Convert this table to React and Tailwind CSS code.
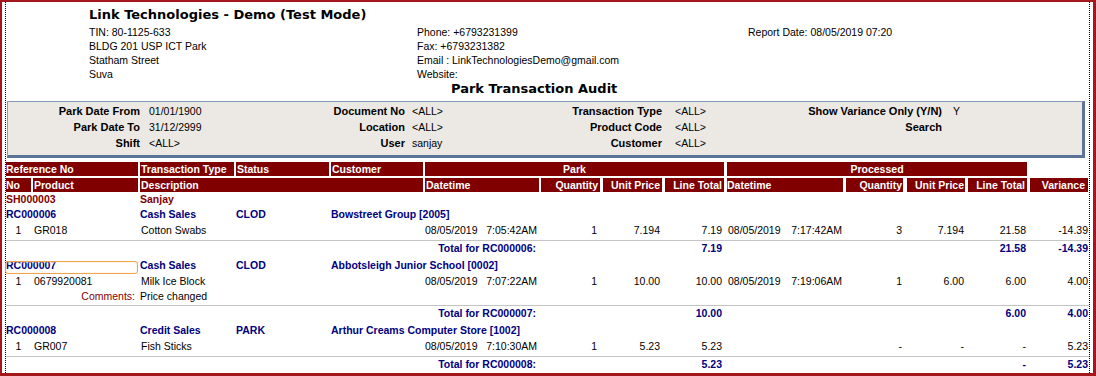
import React from 'react';

const sans = "font-['Liberation_Sans',Arial,sans-serif]";
const verdana = "font-['DejaVu_Sans',Verdana,sans-serif]";

const filterRows = [
  ['Park Date From', '01/01/1900', 'Document No', '<ALL>', 'Transaction Type', '<ALL>', 'Show Variance Only (Y/N)', 'Y'],
  ['Park Date To', '31/12/2999', 'Location', '<ALL>', 'Product Code', '<ALL>', 'Search', ''],
  ['Shift', '<ALL>', 'User', 'sanjay', 'Customer', '<ALL>', '', ''],
];

const groups = [
  {
    ref: 'RC000006',
    type: 'Cash Sales',
    status: 'CLOD',
    customer: 'Bowstreet Group [2005]',
    items: [
      {
        no: '1', code: 'GR018', desc: 'Cotton Swabs',
        pDate: '08/05/2019', pTime: '7:05:42AM', pQty: '1', pPrice: '7.194', pTotal: '7.19',
        dDate: '08/05/2019', dTime: '7:17:42AM', dQty: '3', dPrice: '7.194', dTotal: '21.58', variance: '-14.39',
      },
    ],
    total: { park: '7.19', processed: '21.58', variance: '-14.39' },
  },
  {
    ref: 'RC000007',
    type: 'Cash Sales',
    status: 'CLOD',
    customer: 'Abbotsleigh Junior School [0002]',
    focused: true,
    items: [
      {
        no: '1', code: '0679920081', desc: 'Milk Ice Block',
        pDate: '08/05/2019', pTime: '7:07:22AM', pQty: '1', pPrice: '10.00', pTotal: '10.00',
        dDate: '08/05/2019', dTime: '7:19:06AM', dQty: '1', dPrice: '6.00', dTotal: '6.00', variance: '4.00',
        comment: 'Price changed',
      },
    ],
    total: { park: '10.00', processed: '6.00', variance: '4.00' },
  },
  {
    ref: 'RC000008',
    type: 'Credit Sales',
    status: 'PARK',
    customer: 'Arthur Creams Computer Store [1002]',
    items: [
      {
        no: '1', code: 'GR007', desc: 'Fish Sticks',
        pDate: '08/05/2019', pTime: '7:10:30AM', pQty: '1', pPrice: '5.23', pTotal: '5.23',
        dDate: '', dTime: '', dQty: '-', dPrice: '-', dTotal: '-', variance: '5.23',
      },
    ],
    total: { park: '5.23', processed: '-', variance: '5.23' },
  },
];

function Heading() {
  return (
    <>
      <div className="pl-[83px] pt-[4px]">
        <div className={`${verdana} h-[17px] text-[13px] font-bold leading-[17px]`}>
          Link Technologies - Demo (Test Mode)
        </div>
        <div className="mt-[2px] flex leading-[14px]">
          <div className="w-[328px]">
            <div>TIN: 80-1125-633</div>
            <div>BLDG 201 USP ICT Park</div>
            <div>Statham Street</div>
            <div>Suva</div>
          </div>
          <div className="w-[331px]">
            <div>Phone: +6793231399</div>
            <div>Fax: +6793231382</div>
            <div>Email : LinkTechnologiesDemo@gmail.com</div>
            <div>Website:</div>
          </div>
          <div>Report Date: 08/05/2019 07:20</div>
        </div>
      </div>
      <div className={`${verdana} h-[16px] pl-[445px] text-[13px] font-bold leading-[16px]`}>
        Park Transaction Audit
      </div>
    </>
  );
}

function Filters() {
  return (
    <div className="ml-px mt-[4px] w-[1078px] border-t border-l border-r-[3px] border-b-[3px] border-t-[#8499b9] border-l-[#8499b9] border-r-[#5b7498] border-b-[#5b7498] bg-[#ece9e5] pt-px pb-[4px]">
      {filterRows.map((r, idx) => (
        <div
          key={idx}
          className="grid h-[16px] grid-cols-[132px_135px_130px_127px_130px_110px_170px_1fr] leading-[16px]"
        >
          <div className="text-right text-[11px] font-bold">{r[0]}</div>
          <div className="pl-[9px]">{r[1]}</div>
          <div className="text-right text-[11px] font-bold">{r[2]}</div>
          <div className="pl-[7px]">{r[3]}</div>
          <div className="text-right text-[11px] font-bold">{r[4]}</div>
          <div className="pl-[13px]">{r[5]}</div>
          <div className="text-right text-[11px] font-bold">{r[6]}</div>
          <div className="pl-[11px]">{r[7]}</div>
        </div>
      ))}
    </div>
  );
}

function TableHead() {
  const cell = 'bg-[#800000]';
  return (
    <div className="font-bold text-white">
      <div className="mt-[4px] flex h-[14px] leading-[14px]">
        <div className={`${cell} w-[132px]`}>Reference No</div>
        <div className={`${cell} ml-[2px] w-[94px] pl-px`}>Transaction Type</div>
        <div className={`${cell} ml-[2px] w-[93px] pl-px`}>Status</div>
        <div className={`${cell} ml-[2px] w-[92px] pl-px`}>Customer</div>
        <div className={`${cell} ml-[2px] w-[299px] text-center`}>Park</div>
        <div className={`${cell} ml-[3px] w-[300px] text-center`}>Processed</div>
      </div>
      <div className="mt-[2px] flex h-[14px] leading-[14px]">
        <div className={`${cell} w-[25px]`}>No</div>
        <div className={`${cell} ml-[2px] w-[105px] pl-px`}>Product</div>
        <div className={`${cell} ml-[2px] w-[283px] pl-px`}>Description</div>
        <div className={`${cell} ml-[2px] w-[114px] pl-px`}>Datetime</div>
        <div className={`${cell} ml-[2px] w-[59px] pr-[2px] text-right`}>Quantity</div>
        <div className={`${cell} ml-[3px] w-[59px] pr-[2px] text-right`}>Unit Price</div>
        <div className={`${cell} ml-[3px] w-[59px] pr-[2px] text-right`}>Line Total</div>
        <div className={`${cell} ml-[3px] w-[116px]`}>Datetime</div>
        <div className={`${cell} ml-[3px] w-[57px] pr-px text-right`}>Quantity</div>
        <div className={`${cell} ml-[4px] w-[58px] pr-px text-right`}>Unit Price</div>
        <div className={`${cell} ml-[3px] w-[59px] pr-[2px] text-right`}>Line Total</div>
        <div className={`${cell} ml-[3px] w-[58px] pr-[3px] text-right`}>Variance</div>
      </div>
    </div>
  );
}

function ItemRow({ it }) {
  return (
    <>
      <div className="flex h-[16px] leading-[16px]">
        <div className="w-[25px] text-center">{it.no}</div>
        <div className="ml-[2px] w-[105px] pl-px">{it.code}</div>
        <div className="ml-[2px] w-[283px] pl-px">{it.desc}</div>
        <div className="ml-[2px] flex w-[114px] justify-between pr-[2px]">
          <span>{it.pDate}</span>
          <span>{it.pTime}</span>
        </div>
        <div className="ml-[2px] w-[59px] pr-[3px] text-right">{it.pQty}</div>
        <div className="ml-[3px] w-[59px] pr-[2px] text-right">{it.pPrice}</div>
        <div className="ml-[3px] w-[59px] pr-[2px] text-right">{it.pTotal}</div>
        <div className="ml-[3px] flex w-[116px] justify-between pl-px pr-px">
          <span>{it.dDate}</span>
          <span>{it.dTime}</span>
        </div>
        <div className="ml-[3px] w-[57px] pr-px text-right">{it.dQty}</div>
        <div className="ml-[4px] w-[58px] pr-px text-right">{it.dPrice}</div>
        <div className="ml-[3px] w-[59px] pr-px text-right">{it.dTotal}</div>
        <div className="ml-[3px] w-[58px] text-right">{it.variance}</div>
      </div>
      {it.comment && (
        <div className="flex h-[14px] leading-[14px]">
          <div className="w-[134px] pr-[5px] text-right text-[#8b0000]">Comments:</div>
          <div>{it.comment}</div>
        </div>
      )}
    </>
  );
}

function Group({ g, first }) {
  return (
    <div className={first ? '' : 'mt-px'}>
      <div className="flex h-[16px] font-bold leading-[16px] text-[#000080]">
        <div className="relative w-[134px]">
          {g.ref}
          {g.focused && (
            <span className="absolute left-[-1px] top-[4px] h-[13px] w-[133px] rounded-[3px] border border-[#f0a24e] shadow-[inset_0_0_2px_#fde3c2]" />
          )}
        </div>
        <div className="w-[96px]">{g.type}</div>
        <div className="w-[95px]">{g.status}</div>
        <div>{g.customer}</div>
      </div>
      {g.items.map((it, idx) => (
        <ItemRow key={idx} it={it} />
      ))}
      <div className="mt-[2px] border-t border-[#c4c4c4]" />
      <div className="flex h-[15px] font-bold leading-[15px] text-[#000080]">
        <div className="w-[530px] whitespace-nowrap text-right">Total for {g.ref}:</div>
        <div className="ml-[129px] w-[59px] pr-[2px] text-right">{g.total.park}</div>
        <div className="ml-[244px] w-[59px] pr-px text-right">{g.total.processed}</div>
        <div className="ml-[3px] w-[58px] text-right">{g.total.variance}</div>
      </div>
    </div>
  );
}

export default function App() {
  return (
    <div
      className={`h-[376px] w-[1096px] overflow-hidden border-t-2 border-l-2 border-r-[3px] border-b-[3px] border-[#a3171d] bg-white text-[10.5px] text-black ${sans}`}
    >
      <div className="mx-[3px] h-full border-x border-dotted border-black">
        <Heading />
        <Filters />
        <TableHead />
        <div className="flex h-[14px] font-bold leading-[14px] text-[#800000]">
          <div className="w-[134px]">SH000003</div>
          <div>Sanjay</div>
        </div>
        {groups.map((g, idx) => (
          <Group key={g.ref} g={g} first={idx === 0} />
        ))}
      </div>
    </div>
  );
}
